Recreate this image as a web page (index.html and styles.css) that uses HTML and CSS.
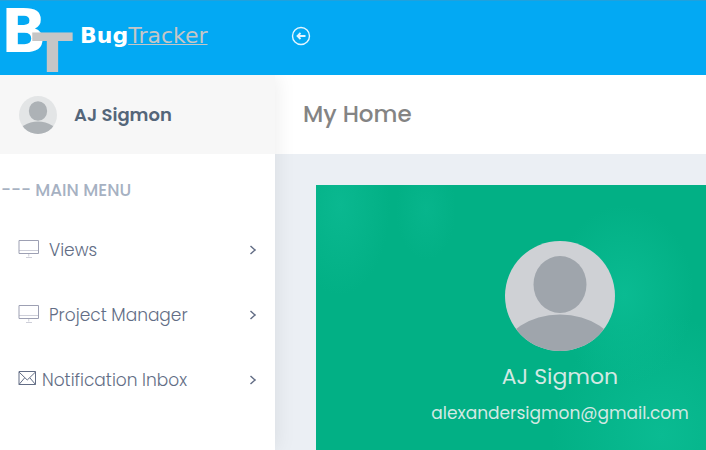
FILE: index.html
```html
<!DOCTYPE html>
<html lang="en">
<head>
<meta charset="utf-8">
<meta name="viewport" content="width=device-width, initial-scale=1">
<title>BugTracker - My Home</title>
<link rel="stylesheet" href="styles.css">
</head>
<body>
<svg class="defs" aria-hidden="true">
  <symbol id="person" viewBox="0 0 110 110">
    <clipPath id="round"><circle cx="55" cy="55" r="55"/></clipPath>
    <g clip-path="url(#round)">
      <rect class="person-back" width="110" height="110"/>
      <ellipse cx="55" cy="43.5" rx="26.5" ry="28.5"/>
      <ellipse cx="55" cy="112" rx="56" ry="38.5"/>
    </g>
  </symbol>
  <symbol id="screen" viewBox="0 0 22 22">
    <path d="M1 1.500H20.500V14.500H1Z" fill="none" stroke="currentColor"/>
    <path d="M1 11.500H20.500M10.750 15V17.500M8 18.500H14" fill="none" stroke="currentColor" opacity=".5"/>
  </symbol>
  <symbol id="chevron" viewBox="0 0 8 12">
    <path d="M1.500 2L6 6L1.500 10" fill="none" stroke="currentColor" stroke-width="1.500"/>
  </symbol>
</svg>
<header class="topbar">
  <a class="brand" href="#">
    <svg class="logo" viewBox="0 0 78 71" aria-hidden="true">
      <text class="logo-b" x="1" y="51">B</text>
      <text class="logo-t" x="32" y="76">T</text>
    </svg>
    <span class="brand-name"><b>Bug</b><span class="brand-tail">Tracker</span></span>
  </a>
  <button class="collapse" type="button" aria-label="Collapse menu">
    <svg viewBox="0 0 20 20" fill="none" stroke="currentColor" aria-hidden="true">
      <circle cx="10" cy="10" r="8.500" stroke-width="1.400"/>
      <path d="M14.500 10H6.500M9.500 7L6.500 10L9.500 13" stroke-width="1.800"/>
    </svg>
  </button>
</header>
<div class="layout">
  <aside class="sidebar">
    <a class="user" href="#">
      <svg class="user-face"><use href="#person"/></svg>
      <span>AJ Sigmon</span>
    </a>
    <h2 class="menu-title">--- MAIN MENU</h2>
    <nav class="menu">
      <a class="item" href="#"><svg class="screen"><use href="#screen"/></svg><span class="label">Views</span><svg class="chevron"><use href="#chevron"/></svg></a>
      <a class="item" href="#"><svg class="screen"><use href="#screen"/></svg><span class="label">Project Manager</span><svg class="chevron"><use href="#chevron"/></svg></a>
      <a class="item" href="#"><svg class="mail" viewBox="0 0 18 20" fill="none" stroke="currentColor"><path d="M1 1.500H17.500V14.500H1ZM1 2L9.250 10L17.500 2M1 14.500L6.500 8M17.500 14.500L12 8"/></svg><span class="label">Notification Inbox</span><svg class="chevron"><use href="#chevron"/></svg></a>
    </nav>
  </aside>
  <main class="main">
    <div class="title-bar"><h1>My Home</h1></div>
    <section class="profile">
      <svg class="profile-face"><use href="#person"/></svg>
      <h3>AJ Sigmon</h3>
      <p>alexandersigmon@gmail.com</p>
    </section>
  </main>
</div>
</body>
</html>
```
FILE: styles.css
```css
* { box-sizing: border-box; }
body {
  margin: 0;
  min-height: 100vh;
  display: flex;
  flex-direction: column;
  background: #ebeff4;
  color: #54667a;
  font-family: Poppins, Inter, "Open Sans", sans-serif;
}
a { color: inherit; text-decoration: none; }
h1, h2, h3, p { margin: 0; }
.defs { position: absolute; width: 0; height: 0; }

.topbar {
  display: flex;
  align-items: center;
  height: 75px;
  padding-bottom: 4px;
  background: #03a9f3;
  border-top: 1px solid #20a1dd;
  color: #fff;
}
.brand {
  display: flex;
  align-items: center;
  width: 275px;
  font-family: "DejaVu Sans", sans-serif;
}
.logo { width: 78px; height: 71px; }
.logo text { font-size: 60px; font-weight: 700; }
.logo-b { fill: #fff; }
.logo-t { fill: #c6c6c6; }
.brand-name { padding-left: 2px; font-size: 22px; line-height: 26px; }
.brand-tail { color: #c6c6c6; text-decoration: underline; text-decoration-thickness: 1px; }
.collapse {
  width: 20px;
  height: 20px;
  margin-left: 16px;
  padding: 0;
  border: 0;
  background: none;
  color: #e3f5ff;
}
.collapse svg { display: block; }

.layout { display: flex; flex: 1; }
.sidebar {
  flex: 0 0 275px;
  background: #fff;
  box-shadow: 1px 0 20px rgba(0, 0, 0, .08);
  clip-path: inset(0 -30px 0 0);
  z-index: 1;
}
.user {
  display: flex;
  align-items: center;
  gap: 18px;
  height: 79px;
  padding-left: 19px;
  background: #f7f7f7;
  font-size: 18px;
  font-weight: 600;
}
.user-face { width: 38px; height: 38px; fill: #adb2b6; --back: #e3e5e6; }
.user { gap: 17px; }
.person-back { fill: var(--back); }
.menu-title {
  padding: 24px 0 15px 1px;
  color: #a6b1c2;
  font-size: 17px;
  line-height: 24px;
  font-weight: 500;
}
.item {
  display: flex;
  align-items: center;
  height: 65px;
  padding: 0 18px;
  font-size: 17px;
  font-weight: 300;
  color: #626d85;
}
.label { flex: 1; }
.screen { width: 22px; height: 22px; margin-right: 9px; color: #9da0b3; }
.mail { width: 18px; height: 20px; margin-right: 6px; }
.chevron { width: 8px; height: 12px; }

.main { flex: 1; min-width: 0; display: flex; flex-direction: column; }
.title-bar {
  display: flex;
  align-items: center;
  height: 79px;
  padding: 0 0 2px 28px;
  background: #fff;
}
h1 { color: #848484; font-size: 23px; font-weight: 500; }
.profile {
  flex: 1;
  display: flex;
  flex-direction: column;
  align-items: center;
  margin: 31px 0 0 41px;
  padding: 56px 0 0 98px;
  background:
    radial-gradient(ellipse 50px 90px at 24px 20px, #0ab890, transparent),
    radial-gradient(ellipse 30px 50px at 110px 25px, #07b58c, transparent),
    radial-gradient(ellipse 70px 90px at 308px 110px, #0abb92, transparent),
    radial-gradient(ellipse 110px 120px at 345px 250px, #0abb92, transparent),
    #02b085;
  color: #d2e9e3;
}
.profile-face { width: 110px; height: 110px; fill: #9fa5ac; --back: #cfd1d5; }
h3 { margin-top: 10px; font-size: 22px; line-height: 32px; font-weight: 400; }
.profile p { margin-top: 7px; font-size: 17px; line-height: 26px; }
```
